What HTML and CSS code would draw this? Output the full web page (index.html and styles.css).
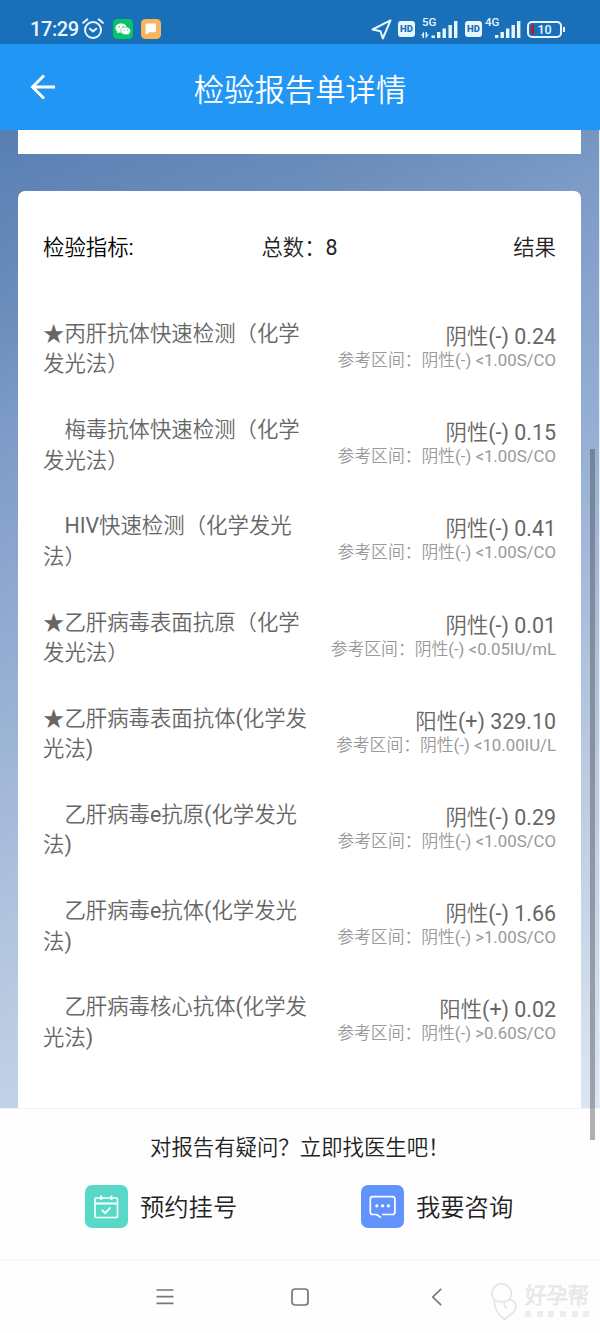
FILE: index.html
```
<!DOCTYPE html>
<html lang="zh-CN">
<head>
  <meta charset="UTF-8">
  <meta name="viewport" content="width=device-width, initial-scale=1">
  <title>检验报告单详情</title>
  <link rel="stylesheet" href="styles.css">
</head>
<body>

  <!-- Phone status bar -->
  <div class="status-bar">
    <span class="clock">17:29</span>
    <svg class="alarm" width="22" height="22" viewBox="0 0 22 22" fill="none" stroke="#e8f6ff" stroke-width="2" stroke-linecap="round">
      <circle cx="11" cy="12" r="8"/>
      <path d="M7.8 10.8l3.2 2.6 3.3-2.6M1.2 4.8l4-3.4M20.8 4.8l-4-3.4"/>
    </svg>
    <svg class="wechat" width="20" height="20" viewBox="0 0 20 20">
      <rect width="20" height="20" rx="4.5" fill="#07c566"/>
      <path d="M8.2 4.4c-3.3 0-5.8 2-5.8 4.7 0 1.5.8 2.7 2 3.6l-.5 1.7 2-1c.7.2 1.5.3 2.3.3 3.3 0 5.7-2 5.7-4.6S11.5 4.4 8.2 4.4z" fill="#fff"/>
      <path d="M12.7 8c-2.8 0-4.9 1.7-4.9 3.9s2.1 3.9 4.9 3.9c.6 0 1.2-.1 1.7-.2l1.7.8-.4-1.4c1.1-.7 1.8-1.8 1.8-3.1C17.5 9.7 15.4 8 12.7 8z" fill="#fff" stroke="#07c566" stroke-width=".6"/>
      <g fill="#07c566"><circle cx="6.2" cy="7.8" r=".7"/><circle cx="10" cy="7.4" r=".7"/><circle cx="11.2" cy="11" r=".6"/><circle cx="14.3" cy="11" r=".6"/></g>
    </svg>
    <svg class="message" width="20" height="20" viewBox="0 0 20 20">
      <rect width="20" height="20" rx="4.5" fill="#f7b45a"/>
      <path d="M5.3 4.5h9.600v8.800H8.600l-4 2.500V5.200z" fill="#fff"/>
    </svg>

    <div class="status-right">
      <svg class="locate" width="21" height="21" viewBox="0 0 21 21" fill="none" stroke="#e8f6ff" stroke-width="2" stroke-linejoin="round">
        <path d="M19.5 1.3L1.5 10.500l8 1.700 2.300 7.300z"/>
      </svg>
      <span class="hd">HD</span>
      <div class="signal signal-5g">
        <span class="net">5G</span>
        <svg width="38" height="21" viewBox="0 0 38 21" fill="#e8f6ff">
          <path d="M3 12.5v6.500H1.600v-2.500H0zM4.500 19.500v-6.500H6v2.500h2z"/>
          <rect x="10.5" y="16.5" width="3.4" height="2.5"/><rect x="16" y="13" width="3.4" height="6"/><rect x="21.5" y="9.5" width="3.4" height="9.5"/><rect x="27.5" y="6" width="3.4" height="13"/><rect x="33" y="2" width="3.4" height="17"/>
        </svg>
      </div>
      <span class="hd">HD</span>
      <div class="signal signal-4g">
        <span class="net">4G</span>
        <svg width="36" height="21" viewBox="0 0 36 21" fill="#e8f6ff">
          <rect x="9" y="16" width="3.4" height="3"/><rect x="14.5" y="13" width="3.4" height="6"/><rect x="20" y="9.5" width="3.4" height="9.5"/><rect x="25.5" y="6" width="3.4" height="13"/><rect x="31" y="2" width="3.4" height="17"/>
        </svg>
      </div>
      <div class="battery"><i></i>10</div>
    </div>
  </div>

  <!-- Page header -->
  <header class="main-header">
    <svg class="back" width="26" height="26" viewBox="0 0 26 26" fill="none" stroke="#fff" stroke-width="3">
      <path d="M25 13H3M14 1.500L2.500 13 14 24.500"/>
    </svg>
    <h1>检验报告单详情</h1>
  </header>

  <main class="report">
    <div class="card card-prev"></div>
    <section class="card card-list">
      <div class="list-head">
        <span class="head-name">检验指标:</span>
        <span>总数：8</span>
        <span class="head-result">结果</span>
      </div>

      <div class="item">
        <div class="name">★丙肝抗体快速检测（化学<br>发光法）</div>
        <div class="result"><b>阴性(-) 0.24</b><small>参考区间：阴性(-) &lt;1.00S/CO</small></div>
      </div>
      <div class="item">
        <div class="name">　梅毒抗体快速检测（化学<br>发光法）</div>
        <div class="result"><b>阴性(-) 0.15</b><small>参考区间：阴性(-) &lt;1.00S/CO</small></div>
      </div>
      <div class="item">
        <div class="name">　HIV快速检测（化学发光<br>法）</div>
        <div class="result"><b>阴性(-) 0.41</b><small>参考区间：阴性(-) &lt;1.00S/CO</small></div>
      </div>
      <div class="item">
        <div class="name">★乙肝病毒表面抗原（化学<br>发光法）</div>
        <div class="result"><b>阴性(-) 0.01</b><small>参考区间：阴性(-) &lt;0.05IU/mL</small></div>
      </div>
      <div class="item">
        <div class="name">★乙肝病毒表面抗体(化学发<br>光法)</div>
        <div class="result"><b>阳性(+) 329.10</b><small>参考区间：阴性(-) &lt;10.00IU/L</small></div>
      </div>
      <div class="item">
        <div class="name">　乙肝病毒e抗原(化学发光<br>法)</div>
        <div class="result"><b>阴性(-) 0.29</b><small>参考区间：阴性(-) &lt;1.00S/CO</small></div>
      </div>
      <div class="item">
        <div class="name">　乙肝病毒e抗体(化学发光<br>法)</div>
        <div class="result"><b>阴性(-) 1.66</b><small>参考区间：阴性(-) &gt;1.00S/CO</small></div>
      </div>
      <div class="item">
        <div class="name">　乙肝病毒核心抗体(化学发<br>光法)</div>
        <div class="result"><b>阳性(+) 0.02</b><small>参考区间：阴性(-) &gt;0.60S/CO</small></div>
      </div>
    </section>
  </main>

  <!-- Ask a doctor -->
  <footer class="ask">
    <p>对报告有疑问？立即找医生吧！</p>
    <div class="actions">
      <a class="action">
        <svg width="43" height="43" viewBox="0 0 43 43" fill="none" stroke="#fff" stroke-width="1.6">
          <rect width="43" height="43" rx="7" fill="#58d9c8" stroke="none"/>
          <rect x="10" y="13" width="22.5" height="19.5" rx="1"/>
          <path d="M10 18.500h22.500M16.200 10.500v4.500M26.500 10.500v4.500" stroke-width="1.8"/>
          <path d="M16.800 24.800l3.400 3.400 5.300-5.700" stroke-width="1.8"/>
        </svg>
        <span>预约挂号</span>
      </a>
      <a class="action">
        <svg width="43" height="43" viewBox="0 0 43 43" fill="none" stroke="#fff" stroke-width="1.7">
          <rect width="43" height="43" rx="7" fill="#6292fc" stroke="none"/>
          <path d="M15 29.500h-3.200a2.500 2.500 0 0 1-2.500-2.500V14.200a2.500 2.500 0 0 1 2.500-2.500h19.600a2.500 2.500 0 0 1 2.500 2.500V27a2.500 2.500 0 0 1-2.500 2.500H21M15 29.200l5 3.300"/>
          <g fill="#fff" stroke="none"><circle cx="15.800" cy="20.800" r="1.600"/><circle cx="21.600" cy="20.800" r="1.600"/><circle cx="27.400" cy="20.800" r="1.600"/></g>
        </svg>
        <span>我要咨询</span>
      </a>
    </div>
  </footer>

  <!-- System navigation -->
  <nav class="system-nav">
    <svg width="18" height="18" viewBox="0 0 18 18" stroke="#777" stroke-width="1.7"><path d="M.5 2h17M.5 8.700h17M.5 15.400h17"/></svg>
    <svg width="18" height="18" viewBox="0 0 18 18" fill="none" stroke="#777" stroke-width="1.7"><rect x="1" y="1" width="16" height="16" rx="3"/></svg>
    <svg width="18" height="18" viewBox="0 0 18 18" fill="none" stroke="#777" stroke-width="1.7"><path d="M13.200.8L4.800 9l8.400 8.200"/></svg>
  </nav>

  <div class="watermark">
    <svg width="28" height="38" viewBox="0 0 28 38" fill="none" stroke="#e6e6e6" stroke-width="1.8">
      <path d="M3 17C-.5 12 .5 5 5.500 2.200c5-2.700 11.500-.7 14 4.300 1.500 3.200.8 7-1 10 4.500 1 7 4.500 6.300 8.500C24 30 18 32 13.500 36.500 7 32 3.500 26 3 17z"/>
      <path d="M3 17c4.500 2.500 10.500 2.300 15.500-.5M14 18c-1.500 3-.5 6 2 7.500"/>
    </svg>
    <div>
      <span class="brand">好孕帮</span>
      <div class="dots"><i></i><i></i><i></i><i></i><i></i><i></i></div>
    </div>
  </div>
  <div class="scrollbar"></div>

</body>
</html>
```
FILE: styles.css
```
* {
  box-sizing: border-box;
}

body {
  margin: 0;
  width: 600px;
  height: 1333px;
  display: flex;
  flex-direction: column;
  position: relative;
  overflow: hidden;
  background: #fefefe;
  color: #222;
  font-family: Roboto, "Noto Sans CJK SC DemiLight", "Noto Sans CJK SC", sans-serif;
  font-size: 21.4px;
}

svg {
  display: block;
  flex: none;
}

/* Status bar */
.status-bar {
  height: 44px;
  flex: none;
  display: flex;
  align-items: center;
  padding: 14px 35px 0 30px;
  background: #1a70b8;
  color: #e8f6ff;
}
.clock {
  width: 52px;
  font-size: 20px;
  font-weight: 500;
  letter-spacing: -0.4px;
}
.wechat { margin-left: 9px; }
.message { margin-left: 8px; }
.status-right {
  margin-left: auto;
  display: flex;
  align-items: center;
}
.hd {
  width: 17px;
  height: 16px;
  border-radius: 3px;
  background: #e8f6ff;
  color: #1a70b8;
  font-size: 9.5px;
  font-weight: 900;
  line-height: 16px;
  text-align: center;
}
.locate { margin-right: 6px; }
.signal {
  position: relative;
}
.signal-5g { margin: 0 6px 0 6px; }
.signal-4g { margin: 0 5px 0 4px; }
.net {
  position: absolute;
  left: 1px;
  top: -2px;
  font-size: 11.5px;
  font-weight: 500;
  line-height: 11px;
}
.signal-4g .net { left: -1px; }
.battery {
  position: relative;
  width: 35px;
  height: 17px;
  margin-right: 3px;
  border: 2px solid #e8f6ff;
  border-radius: 5px;
  font-size: 12.5px;
  font-weight: 500;
  line-height: 14px;
  text-align: center;
}
.battery i {
  position: absolute;
  left: 2px;
  top: 2px;
  width: 3px;
  height: 9px;
  background: #c2182f;
}
.battery::after {
  content: "";
  position: absolute;
  right: -5px;
  top: 4px;
  width: 2px;
  height: 5px;
  background: #e8f6ff;
}

/* Header */
.main-header {
  height: 86px;
  flex: none;
  display: grid;
  grid-template-columns: 60px 1fr 60px;
  align-items: center;
  background: #2196f5;
  color: #fff;
}
.back { margin-left: 30px; }
.main-header h1 {
  margin: 0;
  padding-top: 2px;
  font-size: 30.4px;
  font-weight: 350;
  text-align: center;
}

/* Report */
.report {
  height: 978px;
  flex: none;
  overflow: hidden;
  padding: 0 18px;
  border-right: 1px solid #e9eef6;
  background: linear-gradient(157deg, #597fb3 0%, #6a8cba 14%, #7f9dc8 26%, #8fa8d0 38%, #9bb5d5 50%, #a5b7da 54%, #b3c5de 66%, #c1d1e6 79%, #dde6f3 100%);
}
.card { background: #fff; }
.card-prev {
  height: 24px;
  margin-bottom: 37px;
}
.card-list {
  height: 930px;
  border-radius: 7px;
  padding: 41px 25px 0;
}
.list-head {
  display: grid;
  grid-template-columns: 1fr auto 1fr;
  line-height: 32px;
  margin-bottom: 55px;
}
.head-name { color: #000; }
.head-result { text-align: right; }
.item {
  height: 96.2px;
  display: flex;
  justify-content: space-between;
  color: #666;
}
.name {
  line-height: 30.4px;
  white-space: nowrap;
}
.result {
  padding-top: 5px;
  text-align: right;
  white-space: nowrap;
}
.result b {
  display: block;
  font-weight: 400;
  line-height: 26px;
}
.result small {
  display: block;
  color: #999;
  font-size: 16.8px;
  line-height: 20px;
}

/* Ask a doctor */
.ask {
  height: 153px;
  flex: none;
  border-top: 1px solid #f4f4f4;
  border-bottom: 2px solid #f7f7f7;
}
.ask p {
  margin: 23px 0 0 150px;
  line-height: 32px;
}
.actions {
  display: flex;
  gap: 124px;
  margin: 21px 0 0 85px;
}
.action {
  flex: none;
  width: 152px;
  display: flex;
  align-items: center;
  gap: 12px;
  font-size: 24.3px;
  font-weight: 350;
  white-space: nowrap;
}
.action span { margin-top: -3px; }

/* System navigation */
.system-nav {
  height: 72px;
  flex: none;
  display: flex;
  align-items: center;
  gap: 117px;
  padding-left: 156px;
}
.system-nav svg:nth-child(3) { margin-left: 2px; }

/* Overlays */
.watermark {
  position: absolute;
  left: 491px;
  top: 1283px;
  display: flex;
  gap: 6px;
}
.brand {
  display: block;
  color: #e8e8e8;
  font-size: 21.4px;
  font-weight: 700;
  line-height: 26px;
}
.dots {
  display: flex;
  justify-content: space-between;
  margin-top: 2px;
}
.dots i {
  width: 6px;
  height: 6px;
  background: #ededed;
}
.scrollbar {
  position: absolute;
  right: 5px;
  top: 449px;
  width: 5px;
  height: 691px;
  background: rgba(70, 70, 70, 0.42);
}
```
